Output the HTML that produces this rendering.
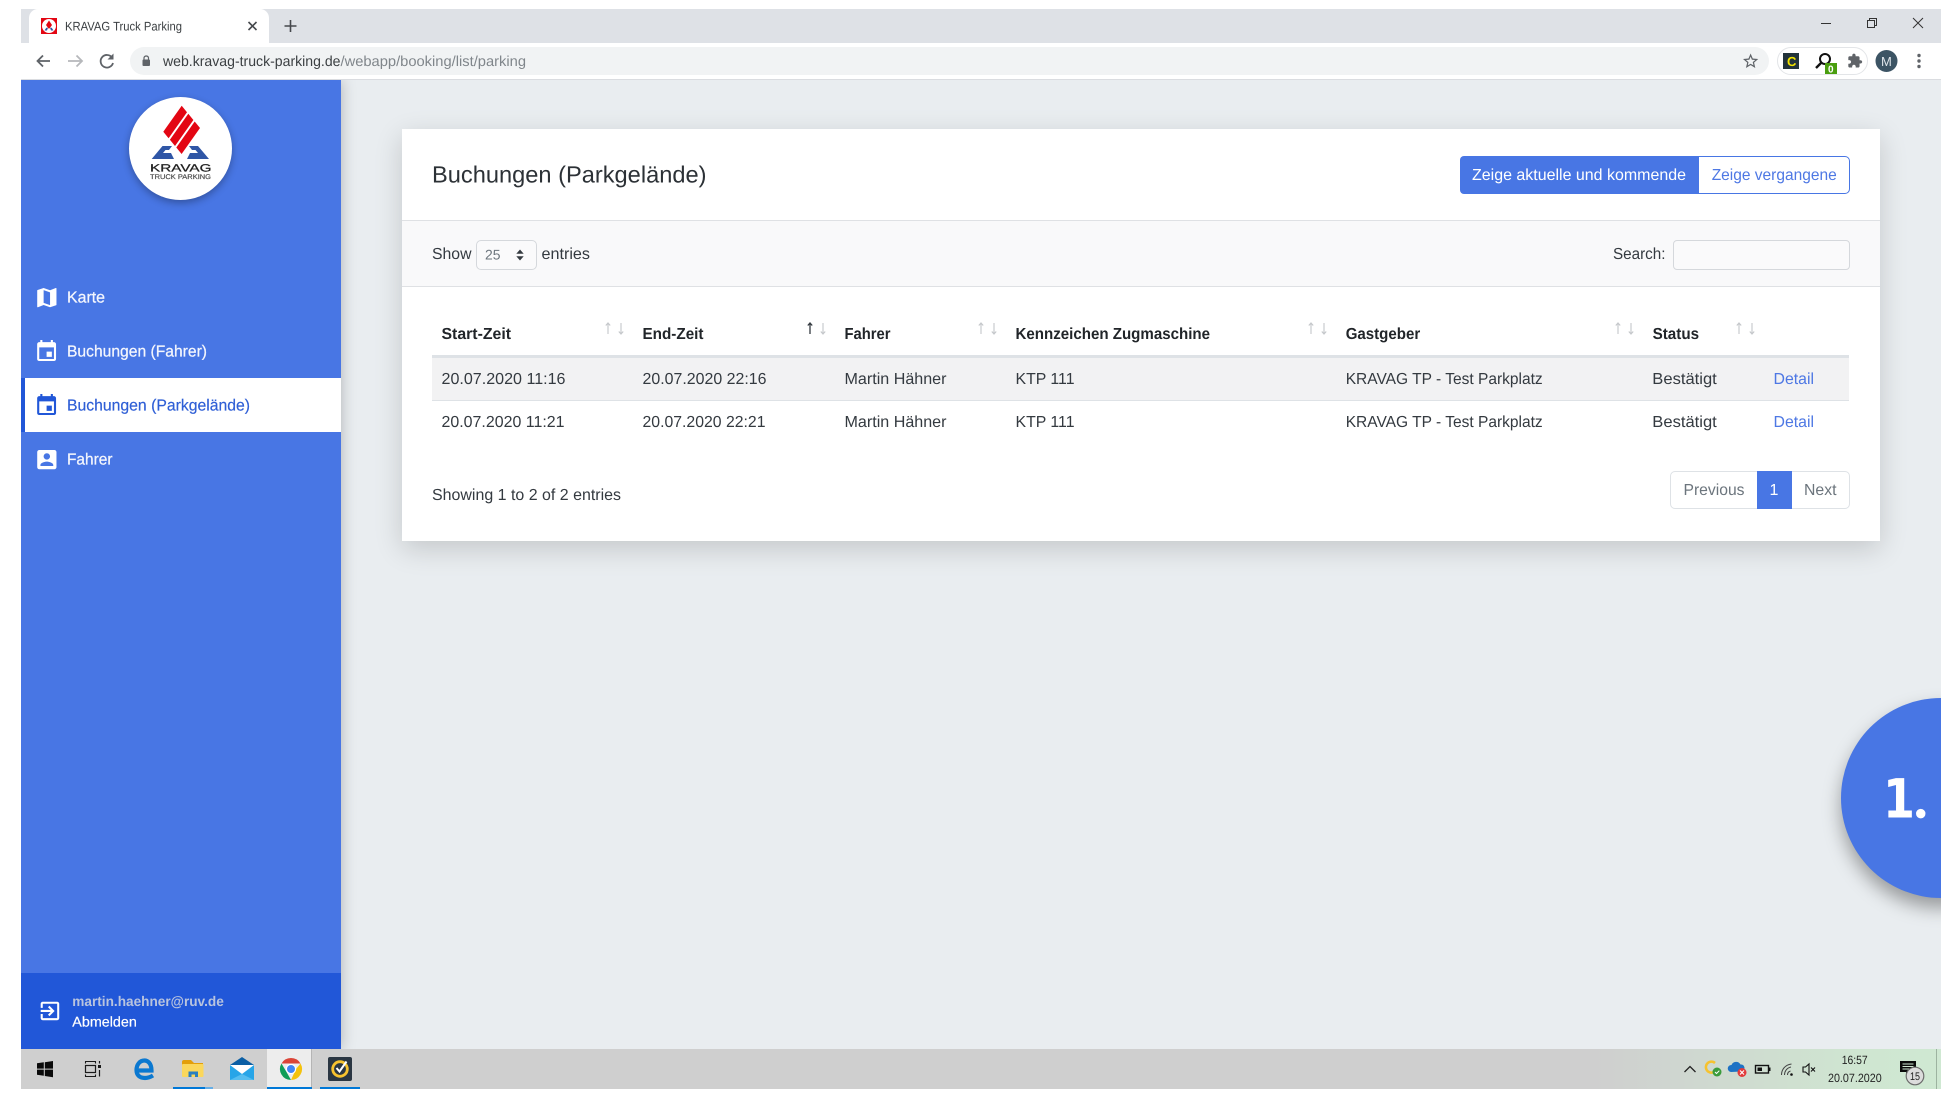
<!DOCTYPE html>
<html lang="de"><head><meta charset="utf-8"><title>KRAVAG Truck Parking</title>
<style>
html,body{margin:0;padding:0;width:1960px;height:1100px;overflow:hidden;background:#fff}
.b{position:absolute;box-sizing:border-box}
svg{position:absolute;left:0;top:0}
text{font-family:"Liberation Sans",sans-serif;font-size:16px;fill:#343a40;text-rendering:geometricPrecision}
.h{font-weight:700;fill:#212529}
.w{fill:#fff}
.n{fill:#f4f6fd;stroke:#f4f6fd;stroke-width:.25px}
.l{fill:#4e78e4}
.c{font-size:14.5px;fill:#3c4043}
.u{fill:#80868b}
</style></head><body>
<div class="b" style="left:21px;top:9px;width:1920px;height:34px;background:#dee1e6"></div>
<div class="b" style="left:29px;top:9px;width:240px;height:34px;background:#fff;border-radius:9px 9px 0 0"></div>
<div class="b" style="left:21px;top:43px;width:1920px;height:37px;background:#fff;border-bottom:1px solid #dadce0"></div>
<div class="b" style="left:129.5px;top:47px;width:1639px;height:28px;background:#f1f3f4;border-radius:14px"></div>
<div class="b" style="left:1777px;top:47px;width:91px;height:28px;border:1px solid #e3e5e8;border-radius:14px"></div>

<div class="b" style="left:21px;top:80px;width:1920px;height:969px;background:#e9edf0"></div>
<div class="b" style="left:21px;top:80px;width:320px;height:969px;background:#4876e4;box-shadow:0 0 14px rgba(0,0,0,.25);clip-path:inset(0 -24px 0 0)"></div>
<div class="b" style="left:21px;top:973px;width:320px;height:76px;background:#2157d8"></div>
<div class="b" style="left:21px;top:378px;width:320px;height:54px;background:#fff;border-left:4px solid #2157d8"></div>
<div class="b" style="left:129px;top:96.5px;width:103px;height:103px;border-radius:50%;background:#fff;box-shadow:0 3px 8px rgba(0,0,0,.3)"></div>

<div class="b" style="left:402px;top:129px;width:1478px;height:412px;background:#fff;box-shadow:0 8px 26px rgba(0,0,0,.16)"></div>
<div class="b" style="left:402px;top:220px;width:1478px;height:67px;background:#f9f9fa;border-top:1px solid #dfe1e4;border-bottom:1px solid #dfe1e4"></div>
<div class="b" style="left:475.5px;top:239.5px;width:61px;height:30.5px;border:1px solid #d5d8dc;border-radius:5px;background:#fafafb"></div>
<div class="b" style="left:1673px;top:239.5px;width:176.5px;height:30.5px;border:1px solid #d5d8dc;border-radius:4px;background:#fafafb"></div>
<div class="b" style="left:432px;top:355px;width:1417px;height:3px;background:#dee2e6"></div>
<div class="b" style="left:432px;top:358px;width:1417px;height:43px;background:#f2f2f3;border-bottom:1px solid #dee2e6"></div>
<div class="b" style="left:1460px;top:156px;width:239px;height:38px;background:#4876e4;border-radius:4px 0 0 4px"></div>
<div class="b" style="left:1698px;top:156px;width:152px;height:38px;background:#fff;border:1px solid #4876e4;border-radius:0 5px 5px 0"></div>
<div class="b" style="left:1670px;top:471px;width:179.5px;height:38px;background:#fff;border:1px solid #dee2e6;border-radius:5px"></div>
<div class="b" style="left:1757px;top:471px;width:35px;height:38px;background:#4876e4"></div>

<div class="b" style="left:21px;top:1049px;width:1920px;height:40px;background:linear-gradient(90deg,#cfcfcf 0,#cfcfcf 82%,#cfe6d1 96%,#cfe8d2 100%)"></div>
<div class="b" style="left:267px;top:1049px;width:45px;height:40px;background:#ededed;border-right:1px solid #b5b5b5"></div>
<div class="b" style="left:173px;top:1087px;width:32px;height:2px;background:#0078d7"></div>
<div class="b" style="left:205px;top:1087px;width:8px;height:2px;background:#66aee6"></div>
<div class="b" style="left:267px;top:1087px;width:45px;height:2px;background:#0078d7"></div>
<div class="b" style="left:320px;top:1087px;width:40px;height:2px;background:#0078d7"></div>
<div class="b" style="left:1936px;top:1049px;width:1px;height:40px;background:#9db3a0"></div>

<div class="b" style="left:1700px;top:660px;width:241px;height:300px;overflow:hidden">
  <div class="b" style="left:141px;top:38px;width:200px;height:200px;border-radius:50%;background:#4876e4;box-shadow:0 10px 18px rgba(0,0,0,.35)"></div>
</div>

<svg width="1960" height="1100" viewBox="0 0 1960 1100" xmlns="http://www.w3.org/2000/svg">
<!-- tab -->
<rect x="41" y="18" width="16" height="16" fill="#e30613"/>
<circle cx="49" cy="26" r="7" fill="#fff"/>
<path d="M49 20.500l3 4.500-2.500 3.500h-1l-2.500-3.500z" fill="#e30613"/>
<path d="M44.500 30.500l1.800-2.800h1.700l-1 2.800zM53.500 30.500l-1.800-2.800h-1.700l1 2.800z" fill="#2f56a6"/>
<text x="65" y="30.500" style="font-size:12.5px;fill:#3c4043" textLength="117" lengthAdjust="spacingAndGlyphs">KRAVAG Truck Parking</text>
<path d="M248.500 22l8 8M256.500 22l-8 8" stroke="#45484c" stroke-width="1.600"/>
<path d="M290.500 20v12M284.500 26h12" stroke="#45484c" stroke-width="1.600"/>
<!-- window controls -->
<path d="M1821 23.500h10" stroke="#333" stroke-width="1"/>
<path d="M1867.500 20.500h7v7h-7zM1869.500 20.500v-2h7v7h-2" fill="none" stroke="#333" stroke-width="1"/>
<path d="M1913 18l10 10M1923 18l-10 10" stroke="#333" stroke-width="1"/>
<!-- toolbar nav -->
<path d="M50 61H37.500M43 55.500L37.500 61l5.500 5.500" fill="none" stroke="#5f6368" stroke-width="1.800"/>
<path d="M68 61h13M76.500 55.500L82 61l-5.500 5.500" fill="none" stroke="#b6b8bb" stroke-width="1.800"/>
<path d="M112 57.500A6.300 6.300 0 1 0 113 63" fill="none" stroke="#5f6368" stroke-width="1.800"/>
<path d="M113.500 53.500v6h-6z" fill="#5f6368"/>
<rect x="142.500" y="59.500" width="7.500" height="6.500" rx="1" fill="#5f6368"/>
<path d="M144 60v-2.200a2.300 2.300 0 0 1 4.500 0V60" fill="none" stroke="#5f6368" stroke-width="1.200"/>
<text x="163" y="66" class="c" textLength="177.500" lengthAdjust="spacingAndGlyphs">web.kravag-truck-parking.de</text>
<text x="340.500" y="66" class="c u" textLength="185.500" lengthAdjust="spacingAndGlyphs">/webapp/booking/list/parking</text>
<g transform="translate(1741.500 52) scale(.76)" fill="#5f6368"><path d="M22 9.240l-7.190-.62L12 2 9.190 8.630 2 9.240l5.460 4.730L5.820 21 12 17.270 18.180 21l-1.630-7.030L22 9.240zM12 15.400l-3.760 2.270 1-4.280-3.320-2.880 4.380-.38L12 6.100l1.710 4.040 4.380.38-3.320 2.880 1 4.280L12 15.400z"/></g>
<rect x="1783" y="53" width="16" height="16" fill="#22333b"/>
<text x="1787" y="66" style="font-size:13px;font-weight:700;fill:#f2e500">C</text>
<circle cx="1825" cy="59" r="5" fill="none" stroke="#111" stroke-width="2"/>
<path d="M1821 63l-5 5" stroke="#111" stroke-width="2.400"/>
<rect x="1825" y="63" width="12" height="11" fill="#4a9e0f"/>
<text x="1828" y="72.500" style="font-size:10px;font-weight:700;fill:#fff">0</text>
<g transform="translate(1847 53) scale(.66)" fill="#5f6368"><path d="M20.500 11H19V7c0-1.100-.9-2-2-2h-4V3.500C13 2.120 11.880 1 10.500 1S8 2.120 8 3.500V5H4c-1.100 0-1.990.9-1.990 2v3.800H3.500c1.490 0 2.700 1.210 2.700 2.700s-1.210 2.700-2.700 2.700H2V20c0 1.100.9 2 2 2h3.800v-1.500c0-1.490 1.210-2.700 2.700-2.700 1.490 0 2.700 1.210 2.700 2.700V22H17c1.100 0 2-.9 2-2v-4h1.500c1.380 0 2.500-1.120 2.500-2.500S21.880 11 20.500 11z"/></g>
<circle cx="1886.500" cy="61" r="11" fill="#3c5464"/>
<text x="1881" y="66" style="font-size:13px;fill:#dfe5ea">M</text>
<circle cx="1919" cy="55.500" r="1.700" fill="#5f6368"/><circle cx="1919" cy="61" r="1.700" fill="#5f6368"/><circle cx="1919" cy="66.500" r="1.700" fill="#5f6368"/>

<!-- logo -->
<path d="M151.700 159L162.500 146H172L169 150H165.500L163 153H171L174 159z" fill="#2f56a6"/>
<path d="M209 159L198 146H189L192 150H195.500L198 153H190L187 159z" fill="#2f56a6"/>
<g fill="#e30613">
<path d="M181.700 105.700L187 112.200L168.600 138.200L163.300 131.700z"/>
<path d="M188.300 113.700L193.400 120L175 146L169.900 139.700z"/>
<path d="M194.700 121.500L200 128L181.600 154L176.300 147.500z"/>
</g>
<text x="150" y="171.500" style="font-size:10.500px;fill:#222;stroke:#222;stroke-width:.25px" textLength="61.500" lengthAdjust="spacingAndGlyphs">KRAVAG</text>
<text x="150" y="179" style="font-size:6.800px;fill:#444;stroke:#444;stroke-width:.15px" textLength="61" lengthAdjust="spacingAndGlyphs">TRUCK PARKING</text>

<!-- sidebar -->
<g transform="translate(34 284.800) scale(1.070)" fill="#fff"><path d="M20.500 3l-.16.03L15 5.100 9 3 3.360 4.900c-.21.07-.36.25-.36.48V20.500c0 .28.22.5.5.5l.16-.03L9 18.900l6 2.100 5.640-1.900c.21-.07.36-.25.36-.48V3.500c0-.28-.22-.5-.5-.5zM15 19l-6-2.110V5l6 2.110V19z"/></g>
<g transform="translate(34 339) scale(1.050)" fill="#fff"><path d="M17 12h-5v5h5v-5zM16 1v2H8V1H6v2H5c-1.110 0-1.990.9-1.990 2L3 19c0 1.100.89 2 2 2h14c1.100 0 2-.9 2-2V5c0-1.100-.9-2-2-2h-1V1h-2zm3 18H5V8h14v11z"/></g>
<g transform="translate(34 393) scale(1.050)" fill="#2157d8"><path d="M17 12h-5v5h5v-5zM16 1v2H8V1H6v2H5c-1.110 0-1.990.9-1.990 2L3 19c0 1.100.89 2 2 2h14c1.100 0 2-.9 2-2V5c0-1.100-.9-2-2-2h-1V1h-2zm3 18H5V8h14v11z"/></g>
<g transform="translate(34 446.800) scale(1.070)" fill="#fff"><path d="M3 5v14c0 1.100.89 2 2 2h14c1.100 0 2-.9 2-2V5c0-1.100-.9-2-2-2H5c-1.110 0-2 .9-2 2zm12 4c0 1.660-1.340 3-3 3s-3-1.340-3-3 1.340-3 3-3 3 1.340 3 3zm-9 8c0-2 4-3.100 6-3.100s6 1.100 6 3.100v1H6v-1z"/></g>
<text x="67" y="302.700" class="n" textLength="38" lengthAdjust="spacingAndGlyphs">Karte</text>
<text x="67" y="356.700" class="n" textLength="140" lengthAdjust="spacingAndGlyphs">Buchungen (Fahrer)</text>
<text x="67" y="410.700" style="fill:#2f5fd6;stroke:#2f5fd6;stroke-width:.2px" textLength="183" lengthAdjust="spacingAndGlyphs">Buchungen (Parkgelände)</text>
<text x="67" y="464.700" class="n" textLength="45.500" lengthAdjust="spacingAndGlyphs">Fahrer</text>
<g transform="translate(37.600 998.600) scale(1.030)" fill="#fff"><path d="M10.090 15.590L11.500 17l5-5-5-5-1.410 1.410L12.670 11H3v2h9.670l-2.580 2.590zM19 3H5c-1.110 0-2 .9-2 2v4h2V5h14v14H5v-4H3v4c0 1.100.89 2 2 2h14c1.100 0 2-.9 2-2V5c0-1.100-.9-2-2-2z"/></g>
<text x="72.300" y="1006" style="font-size:14px;font-weight:700;fill:#b9c4de" textLength="151.500" lengthAdjust="spacingAndGlyphs">martin.haehner@ruv.de</text>
<text x="72.300" y="1026.700" style="font-size:14px;fill:#fff;stroke:#fff;stroke-width:.2px" textLength="64.500" lengthAdjust="spacingAndGlyphs">Abmelden</text>

<!-- card header -->
<text x="432" y="182.500" style="font-size:23.500px;fill:#2c3136" textLength="274.500" lengthAdjust="spacingAndGlyphs">Buchungen (Parkgelände)</text>
<text x="1472" y="180" class="w" textLength="214" lengthAdjust="spacingAndGlyphs">Zeige aktuelle und kommende</text>
<text x="1711.700" y="180" class="l" textLength="125" lengthAdjust="spacingAndGlyphs">Zeige vergangene</text>

<!-- filter -->
<text x="432" y="259" textLength="39.500" lengthAdjust="spacingAndGlyphs">Show</text>
<text x="485" y="259.500" style="font-size:14px;fill:#6c757d" textLength="15.500" lengthAdjust="spacingAndGlyphs">25</text>
<path d="M520 249.500l-3.700 4.200h7.400zM520 260.500l-3.700-4.200h7.400z" fill="#343a40"/>
<text x="541.500" y="259" textLength="48.500" lengthAdjust="spacingAndGlyphs">entries</text>
<text x="1613" y="259" textLength="52.500" lengthAdjust="spacingAndGlyphs">Search:</text>

<!-- table header -->
<text x="441.500" y="339" class="h" textLength="69.500" lengthAdjust="spacingAndGlyphs">Start-Zeit</text>
<text x="642.500" y="339" class="h" textLength="61" lengthAdjust="spacingAndGlyphs">End-Zeit</text>
<text x="844.500" y="339" class="h" textLength="46" lengthAdjust="spacingAndGlyphs">Fahrer</text>
<text x="1015.500" y="339" class="h" textLength="194.500" lengthAdjust="spacingAndGlyphs">Kennzeichen Zugmaschine</text>
<text x="1345.700" y="339" class="h" textLength="74.500" lengthAdjust="spacingAndGlyphs">Gastgeber</text>
<text x="1652.600" y="339" class="h" textLength="46.500" lengthAdjust="spacingAndGlyphs">Status</text>
<!-- sort arrows -->
<g fill="none" stroke-width="1.100" stroke="#c4c7ca">
<path d="M608 334v-11M605.800 325.500l2.200-2.500 2.200 2.500M621 323v11M618.800 331.500l2.200 2.500 2.200-2.500"/>
<path d="M823 323v11M820.800 331.500l2.200 2.500 2.200-2.500"/>
<path d="M981 334v-11M978.800 325.500l2.200-2.500 2.200 2.500M994 323v11M991.800 331.500l2.200 2.500 2.200-2.500"/>
<path d="M1311 334v-11M1308.800 325.500l2.200-2.500 2.200 2.500M1324 323v11M1321.800 331.500l2.200 2.500 2.200-2.500"/>
<path d="M1618 334v-11M1615.800 325.500l2.200-2.500 2.200 2.500M1631 323v11M1628.800 331.500l2.200 2.500 2.200-2.500"/>
<path d="M1739 334v-11M1736.800 325.500l2.200-2.500 2.200 2.500M1752 323v11M1749.800 331.500l2.200 2.500 2.200-2.500"/>
</g>
<path d="M810 334v-11M807.800 325.500l2.200-2.500 2.200 2.500" fill="none" stroke="#343a40" stroke-width="1.300"/>

<!-- rows -->
<text x="441.500" y="384" textLength="124" lengthAdjust="spacingAndGlyphs">20.07.2020 11:16</text>
<text x="642.500" y="384" textLength="124" lengthAdjust="spacingAndGlyphs">20.07.2020 22:16</text>
<text x="844.500" y="384" textLength="102" lengthAdjust="spacingAndGlyphs">Martin Hähner</text>
<text x="1015.500" y="384" textLength="59" lengthAdjust="spacingAndGlyphs">KTP 111</text>
<text x="1345.700" y="384" textLength="197" lengthAdjust="spacingAndGlyphs">KRAVAG TP - Test Parkplatz</text>
<text x="1652.300" y="384" textLength="64.500" lengthAdjust="spacingAndGlyphs">Bestätigt</text>
<text x="1773.500" y="384" class="l" textLength="40.500" lengthAdjust="spacingAndGlyphs">Detail</text>
<text x="441.500" y="427" textLength="123" lengthAdjust="spacingAndGlyphs">20.07.2020 11:21</text>
<text x="642.500" y="427" textLength="123" lengthAdjust="spacingAndGlyphs">20.07.2020 22:21</text>
<text x="844.500" y="427" textLength="102" lengthAdjust="spacingAndGlyphs">Martin Hähner</text>
<text x="1015.500" y="427" textLength="59" lengthAdjust="spacingAndGlyphs">KTP 111</text>
<text x="1345.700" y="427" textLength="197" lengthAdjust="spacingAndGlyphs">KRAVAG TP - Test Parkplatz</text>
<text x="1652.300" y="427" textLength="64.500" lengthAdjust="spacingAndGlyphs">Bestätigt</text>
<text x="1773.500" y="427" class="l" textLength="40.500" lengthAdjust="spacingAndGlyphs">Detail</text>

<text x="432" y="500" textLength="189" lengthAdjust="spacingAndGlyphs">Showing 1 to 2 of 2 entries</text>
<text x="1683.500" y="495" style="fill:#6c757d" textLength="61" lengthAdjust="spacingAndGlyphs">Previous</text>
<text x="1769.500" y="495" class="w">1</text>
<text x="1804" y="495" style="fill:#6c757d" textLength="32.500" lengthAdjust="spacingAndGlyphs">Next</text>

<!-- big number -->
<text x="1883" y="817.500" style="font-family:'DejaVu Sans',sans-serif;font-size:54px;font-weight:700;fill:#fff" textLength="32" lengthAdjust="spacingAndGlyphs">1</text>
<text x="1913.500" y="817.500" style="font-family:'Liberation Serif',serif;font-size:58px;font-weight:700;fill:#fff">.</text>

<!-- taskbar icons -->
<path d="M37 1063.300l6.800-1v6.300H37zM44.800 1062.200l8.200-1.200v7.600h-8.200zM37 1069.600h6.800v6.200l-6.800-1zM44.800 1069.600H53v7.600l-8.200-1.200z" fill="#0a0a0a"/>
<path d="M85 1061.500h11M85.500 1061.500v2M95.500 1061.500v2M85 1076.500h11M85.500 1076.500v-2M95.500 1076.500v-2" fill="none" stroke="#1a1a1a" stroke-width="1.100"/>
<rect x="85.500" y="1065.500" width="10" height="7" fill="none" stroke="#1a1a1a" stroke-width="1.200"/>
<rect x="98" y="1065" width="3" height="3" fill="#1a1a1a"/>
<path d="M99.500 1061v2.500M99.500 1070v6.500" stroke="#1a1a1a" stroke-width="1.200"/>
<path d="M137.500 1070.500H151.500C151.500 1063 147.500 1060.500 144.500 1060.500C139.500 1060.500 136.500 1065 136.500 1070C136.500 1075.500 140 1078 145 1078C148 1078 150.500 1077 153 1075.500" fill="none" stroke="#0b78d0" stroke-width="4.200"/>
<path d="M182 1062a2 2 0 0 1 2-2h7l3 3h9v3h-21z" fill="#e39f0a"/>
<rect x="182" y="1064" width="21.500" height="13" rx="1" fill="#fbd75b"/>
<path d="M188.500 1077v-5.500h9.500v5.500h-3v-2.500h-3.500v2.500z" fill="#2a7fc1"/>
<path d="M242 1057l12 8v2h-24v-2z" fill="#0b5fa5"/>
<rect x="230" y="1065" width="24" height="15" fill="#27a5e8"/>
<path d="M230 1065h24l-12 9z" fill="#fff"/>
<path d="M230 1080l12-6 12 6z" fill="#55bdf0"/>
<path d="M291 1058A11 11 0 0 1 300.530 1063.500H291L281.470 1063.500A11 11 0 0 1 291 1058z" fill="#db4437"/>
<path d="M300.530 1063.500A11 11 0 0 1 291 1080L296 1069z" fill="#f4c20d"/>
<path d="M291 1080A11 11 0 0 1 281.470 1063.500L286.500 1072z" fill="#0f9d58"/>
<circle cx="291" cy="1069" r="5.200" fill="#fff"/><circle cx="291" cy="1069" r="4" fill="#4285f4"/>
<rect x="328" y="1057" width="24" height="24" rx="2" fill="#2a3642"/>
<circle cx="340" cy="1069" r="7.300" fill="none" stroke="#f6c22f" stroke-width="2.800"/>
<path d="M336.500 1068l3 3.500 7-10" fill="none" stroke="#fff" stroke-width="2"/>

<!-- tray -->
<path d="M1684.500 1072l5.500-5.500 5.500 5.500" fill="none" stroke="#222" stroke-width="1.300"/>
<path d="M1715 1063a5.500 5.500 0 1 0 -1 9" fill="none" stroke="#f6c22f" stroke-width="2.500"/>
<circle cx="1717" cy="1072" r="4.500" fill="#3b9b3c"/><path d="M1715 1072l1.500 1.500 2.800-2.800" fill="none" stroke="#fff" stroke-width="1"/>
<path d="M1731 1072a3.500 3.500 0 0 1 .5-7a5 5 0 0 1 9 -.5a3.500 3.500 0 0 1 1 7z" fill="#1d72c4"/>
<circle cx="1742" cy="1072.500" r="4.500" fill="#e23b3b"/><path d="M1740 1070.500l4 4M1744 1070.500l-4 4" stroke="#fff" stroke-width="1.100"/>
<rect x="1755.500" y="1065.500" width="13" height="7.500" fill="none" stroke="#111" stroke-width="1.400"/><rect x="1757.500" y="1067.500" width="4.500" height="3.500" fill="#111"/><rect x="1769" y="1067.500" width="1.500" height="3.500" fill="#111"/>
<path d="M1781.500 1075c0-5 3-10 10-11M1784.500 1075c0-3.500 2-7 6.500-8M1787.500 1075c0-1.800 1-3.500 3-4" fill="none" stroke="#444" stroke-width="1"/><circle cx="1791.500" cy="1074.500" r="1.300" fill="#111"/>
<path d="M1803 1067h2.500l3.500-3v11l-3.500-3H1803z" fill="none" stroke="#111" stroke-width="1.100"/>
<path d="M1811 1067.500l4 4M1815 1067.500l-4 4" stroke="#111" stroke-width="1.100"/>
<text x="1841.700" y="1064" style="font-size:12px;fill:#222" textLength="26" lengthAdjust="spacingAndGlyphs">16:57</text>
<text x="1828" y="1082" style="font-size:12px;fill:#222" textLength="53.700" lengthAdjust="spacingAndGlyphs">20.07.2020</text>
<path d="M1900 1061h16v11h-7l-3 3v-3h-6z" fill="#0a0a0a"/>
<path d="M1902.500 1064h11M1902.500 1066.500h11M1902.500 1069h11" stroke="#cfe6d1" stroke-width="1"/>
<circle cx="1915" cy="1076" r="8.800" fill="#dcdcdc" stroke="#6c6c6c" stroke-width="1.200"/>
<text x="1910" y="1080" style="font-size:11px;fill:#222" textLength="10" lengthAdjust="spacingAndGlyphs">15</text>
</svg>
</body></html>
